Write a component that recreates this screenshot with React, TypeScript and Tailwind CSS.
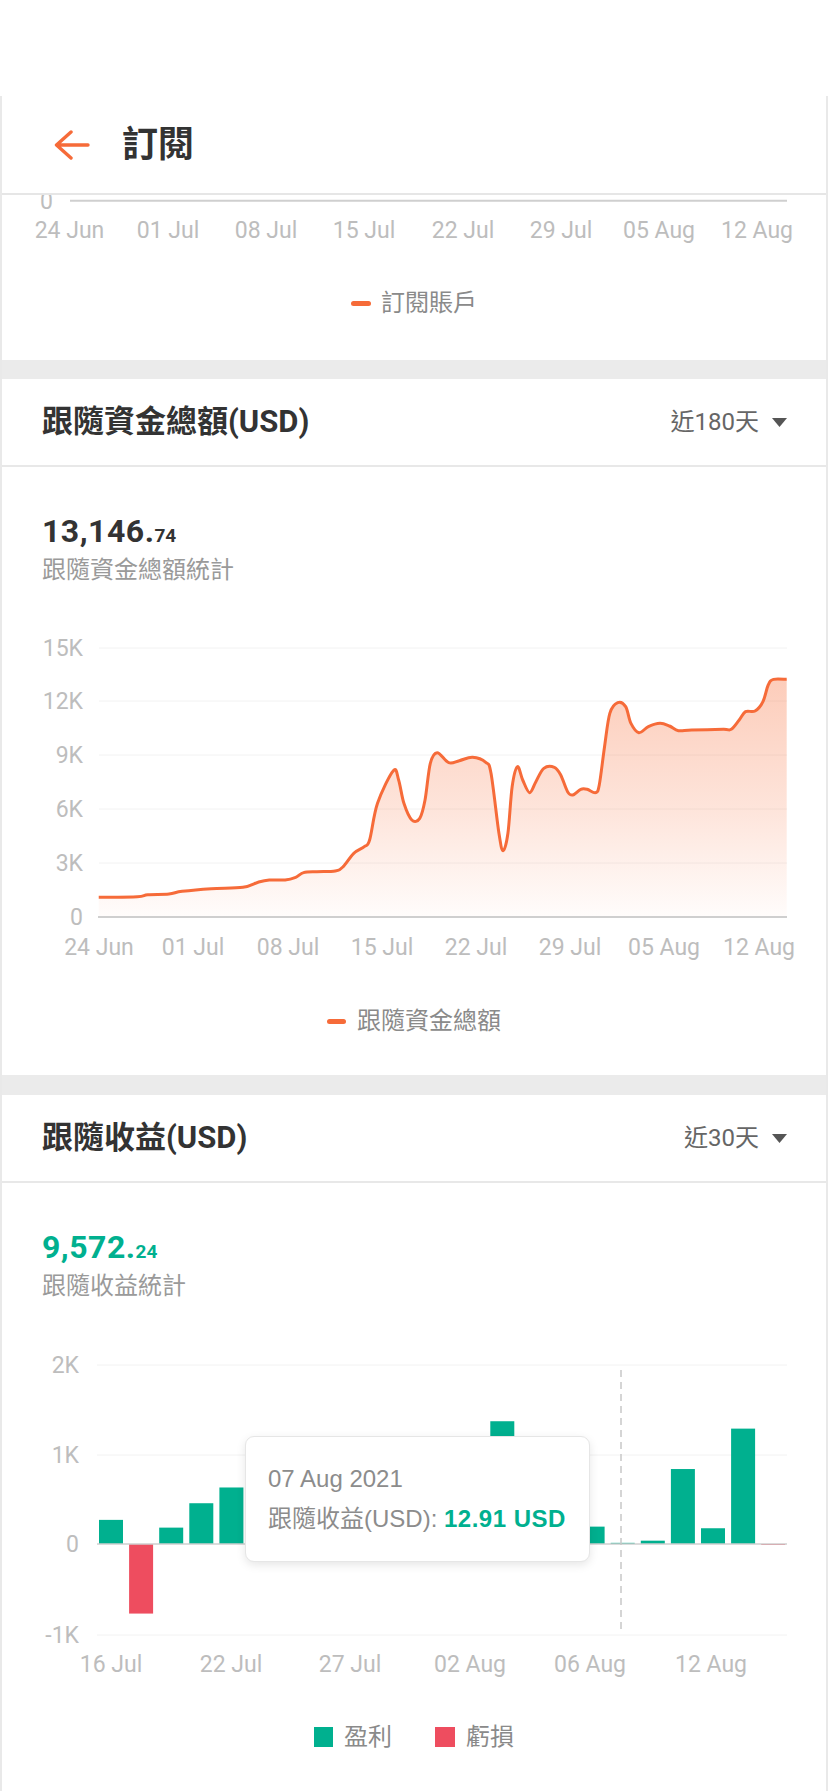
import React from "react";

const ORANGE = "#f66b39";
const GREEN = "#00b08f";
const RED = "#ee4d5f";

type P = [number, number];

function smoothPath(pts: P[]) {
  let d = `M${pts[0][0].toFixed(2)},${pts[0][1].toFixed(2)}`;
  for (let i = 0; i < pts.length - 1; i++) {
    const p0 = pts[i - 1] || pts[i];
    const p1 = pts[i];
    const p2 = pts[i + 1];
    const p3 = pts[i + 2] || p2;
    const c1: P = [p1[0] + (p2[0] - p0[0]) / 6, p1[1] + (p2[1] - p0[1]) / 6];
    const c2: P = [p2[0] - (p3[0] - p1[0]) / 6, p2[1] - (p3[1] - p1[1]) / 6];
    d += ` C${c1[0].toFixed(2)},${c1[1].toFixed(2)} ${c2[0].toFixed(2)},${c2[1].toFixed(2)} ${p2[0].toFixed(2)},${p2[1].toFixed(2)}`;
  }
  return d;
}

// traced points (zoom coordinates) for the fund total line
const RAW: P[] = [
  [187, 892], [260, 890], [280, 884], [320, 882], [345, 874], [400, 866], [460, 862],
  [490, 846], [510, 840], [540, 840], [560, 832], [575, 818], [600, 815], [635, 813],
  [650, 800], [670, 760], [690, 740], [700, 720], [715, 610], [745, 512], [755, 540],
  [765, 610], [780, 660], [795, 655], [805, 600], [815, 490], [828, 458], [850, 488],
  [870, 482], [895, 472], [920, 487], [930, 520], [945, 700], [953, 752], [962, 700],
  [970, 560], [980, 500], [990, 540], [1003, 578], [1015, 545], [1030, 505], [1050, 502],
  [1062, 525], [1075, 575], [1085, 585], [1100, 568], [1112, 568], [1128, 578], [1135, 555],
  [1145, 440], [1155, 340], [1170, 308], [1185, 320], [1195, 370], [1210, 398], [1228, 380],
  [1250, 370], [1268, 378], [1285, 392], [1310, 390], [1370, 388], [1385, 388], [1400, 360],
  [1412, 335], [1430, 333], [1445, 305], [1455, 255], [1465, 238], [1490, 238],
];

// chart 2 svg top at page y=585, left offset 2
const LINE_PTS: P[] = RAW.map(([zx, zy]) => [zx / 1.894 - 2, zy / 3 + 600 - 585]);

const BARS = [
  0.268, -0.773, 0.182, 0.453, 0.628, 0.52, 0.3, 0.15, 0.7, 0.41, 0.88, 0.24, 0.33,
  1.364, 0.64, 0.32, 0.193, 0.0129, 0.037, 0.833, 0.175, 1.282, -0.006,
];

function BackArrow() {
  return (
    <svg width="36" height="30" viewBox="0 0 36 30" fill="none">
      <path
        d="M2.5 15 H34 M17 2 L2.5 15 L17 28"
        stroke={ORANGE}
        strokeWidth="3.4"
        strokeLinecap="round"
        strokeLinejoin="round"
      />
    </svg>
  );
}

function Caret() {
  return (
    <svg width="15" height="9" viewBox="0 0 15 9">
      <path d="M0 0 H15 L7.5 9 Z" fill="#555" />
    </svg>
  );
}

function SectionHeader({ title, range }: { title: string; range: string }) {
  return (
    <div className="flex h-[88px] items-center justify-between border-b-2 border-[#e8e8e8] pl-[40px] pr-[39px]">
      <div className="text-[31px] font-bold leading-[40px] text-[#333]">{title}</div>
      <div className="flex items-center gap-[13px]">
        <span className="text-[24px] leading-[30px] text-[#666]">{range}</span>
        <Caret />
      </div>
    </div>
  );
}

function Chart1Remnant() {
  const labels = ["24 Jun", "01 Jul", "08 Jul", "15 Jul", "22 Jul", "29 Jul", "05 Aug", "12 Aug"];
  const xs = [69.5, 168, 266, 364, 463, 561, 659, 757];
  return (
    <svg width="824" height="60" className="block">
      <line x1={68} x2={785} y1={5.7} y2={5.7} stroke="#cfcfcf" strokeWidth="2" />
      <text x={51} y={6} textAnchor="end" dominantBaseline="central" fontSize="23" fill="#bdbdbd">
        0
      </text>
      {labels.map((l, i) => (
        <text
          key={l}
          x={xs[i] - 2}
          y={35}
          textAnchor="middle"
          dominantBaseline="central"
          fontSize="23"
          fill="#bdbdbd"
        >
          {l}
        </text>
      ))}
    </svg>
  );
}

function Chart2() {
  const grid = [
    { y: 63, l: "15K" },
    { y: 116, l: "12K" },
    { y: 170, l: "9K" },
    { y: 224, l: "6K" },
    { y: 278, l: "3K" },
  ];
  const zero = 332;
  const labels = ["24 Jun", "01 Jul", "08 Jul", "15 Jul", "22 Jul", "29 Jul", "05 Aug", "12 Aug"];
  const xs = [99, 193, 288, 382, 476, 570, 664, 759];
  const line = smoothPath(LINE_PTS);
  const last = LINE_PTS[LINE_PTS.length - 1];
  const first = LINE_PTS[0];
  const area = `${line} L${last[0]},${zero} L${first[0]},${zero} Z`;
  return (
    <svg width="824" height="390" className="block">
      <defs>
        <linearGradient id="fundFill" x1="0" y1="0" x2="0" y2="1">
          <stop offset="0" stopColor="#f87a4a" stopOpacity="0.38" />
          <stop offset="0.55" stopColor="#f87a4a" stopOpacity="0.2" />
          <stop offset="1" stopColor="#f87a4a" stopOpacity="0.02" />
        </linearGradient>
      </defs>
      {grid.map((g) => (
        <g key={g.l}>
          <line x1={97} x2={785} y1={g.y} y2={g.y} stroke="#f2f2f2" strokeWidth="1" />
          <text x={81} y={g.y} textAnchor="end" dominantBaseline="central" fontSize="23" fill="#bdbdbd">
            {g.l}
          </text>
        </g>
      ))}
      <path d={area} fill="url(#fundFill)" />
      <path d={line} fill="none" stroke={ORANGE} strokeWidth="3" strokeLinejoin="round" />
      <line x1={96} x2={785} y1={zero} y2={zero} stroke="#cfcfcf" strokeWidth="2" />
      <text x={81} y={zero} textAnchor="end" dominantBaseline="central" fontSize="23" fill="#bdbdbd">
        0
      </text>
      {labels.map((l, i) => (
        <text
          key={l}
          x={xs[i] - 2}
          y={362}
          textAnchor="middle"
          dominantBaseline="central"
          fontSize="23"
          fill="#bdbdbd"
        >
          {l}
        </text>
      ))}
    </svg>
  );
}

function Chart3() {
  const zero = 240;
  const perK = 90;
  const grid = [
    { y: 61, l: "2K" },
    { y: 151, l: "1K" },
    { y: 331, l: "-1K" },
  ];
  const labels = ["16 Jul", "22 Jul", "27 Jul", "02 Aug", "06 Aug", "12 Aug"];
  const xs = [111, 231, 350, 470, 590, 711];
  return (
    <svg width="824" height="388" className="block">
      {grid.map((g) => (
        <g key={g.l}>
          <line x1={95} x2={785} y1={g.y} y2={g.y} stroke="#f2f2f2" strokeWidth="1" />
          <text x={77} y={g.y} textAnchor="end" dominantBaseline="central" fontSize="23" fill="#bdbdbd">
            {g.l}
          </text>
        </g>
      ))}
      <text x={77} y={zero} textAnchor="end" dominantBaseline="central" fontSize="23" fill="#bdbdbd">
        0
      </text>
      {BARS.map((v, i) => {
        const x = 97 + i * 30.1;
        const h = Math.max(Math.abs(v) * perK, 1);
        const y = v >= 0 ? zero - h : zero;
        return <rect key={i} x={x} y={y} width={24} height={h} fill={v >= 0 ? GREEN : RED} />;
      })}
      <line x1={95} x2={785} y1={zero} y2={zero} stroke="#cfcfcf" strokeWidth="1.5" />
      <line x1={619} x2={619} y1={66} y2={330} stroke="#c8c8c8" strokeWidth="1.5" strokeDasharray="7 5" />
      {labels.map((l, i) => (
        <text
          key={l}
          x={xs[i] - 2}
          y={360}
          textAnchor="middle"
          dominantBaseline="central"
          fontSize="23"
          fill="#bdbdbd"
        >
          {l}
        </text>
      ))}
    </svg>
  );
}

export default function App() {
  return (
    <div className="min-h-screen bg-white font-['Roboto','Noto_Sans_CJK_TC',sans-serif]">
      <div className="h-[96px]" />
      <div className="border-x-2 border-[#e9e9e9]">
        {/* Header */}
        <div className="flex h-[99px] items-center border-b-2 border-[#e6e6e6] pl-[52px]">
          <BackArrow />
          <div className="ml-[32px] text-[36px] font-bold leading-[44px] text-[#333]">訂閱</div>
        </div>

        {/* Section 1 remnant */}
        <div className="flex h-[165px] flex-col overflow-hidden">
          <Chart1Remnant />
          <div className="mt-[33px] flex items-center justify-center gap-[10px]">
            <span className="h-[5px] w-[20px] rounded-full bg-[#f66b39]" />
            <span className="text-[24px] leading-[30px] text-[#8a8a8a]">訂閱賬戶</span>
          </div>
        </div>

        <div className="h-[19px] bg-[#ebebeb]" />

        {/* Section 2 */}
        <SectionHeader title="跟隨資金總額(USD)" range="近180天" />
        <div className="flex h-[608px] flex-col pt-[47px]">
          <div className="flex items-baseline pl-[40px] font-bold text-[#333]">
            <span className="text-[32px] leading-[34px] tracking-[0.5px]">13,146.</span>
            <span className="text-[19px] leading-[34px]">74</span>
          </div>
          <div className="mt-[2px] pl-[40px] text-[24px] leading-[30px] text-[#9a9a9a]">跟隨資金總額統計</div>
          <Chart2 />
          <div className="mt-[31px] flex items-center justify-center gap-[11px]">
            <span className="h-[5px] w-[19px] rounded-full bg-[#f66b39]" />
            <span className="text-[24px] leading-[30px] text-[#8a8a8a]">跟隨資金總額</span>
          </div>
        </div>

        <div className="h-[20px] bg-[#ebebeb]" />

        {/* Section 3 */}
        <SectionHeader title="跟隨收益(USD)" range="近30天" />
        <div className="relative flex h-[608px] flex-col pt-[47px]">
          <div className="flex items-baseline pl-[40px] font-bold text-[#00b08f]">
            <span className="text-[32px] leading-[34px] tracking-[0.5px]">9,572.</span>
            <span className="text-[19px] leading-[34px]">24</span>
          </div>
          <div className="mt-[2px] pl-[40px] text-[24px] leading-[30px] text-[#9a9a9a]">跟隨收益統計</div>
          <div className="mt-[3px]">
            <Chart3 />
          </div>
          <div className="mt-[30px] flex items-center justify-center">
            <span className="h-[20px] w-[19px] bg-[#00b08f]" />
            <span className="ml-[11px] text-[24px] leading-[30px] text-[#8a8a8a]">盈利</span>
            <span className="ml-[43px] h-[20px] w-[20px] bg-[#ee4d5f]" />
            <span className="ml-[11px] text-[24px] leading-[30px] text-[#8a8a8a]">虧損</span>
          </div>

          {/* Tooltip */}
          <div className="absolute left-[243px] top-[253px] flex h-[126px] w-[345px] flex-col justify-center gap-[10px] rounded-[9px] border border-[#e6e6e6] bg-white pl-[22px] font-['Liberation_Sans','Noto_Sans_CJK_TC',sans-serif] shadow-[0_3px_10px_rgba(0,0,0,0.10)]">
            <div className="text-[24px] leading-[30px] text-[#8c8c8c]">07 Aug 2021</div>
            <div className="whitespace-nowrap text-[24px] leading-[30px] text-[#8c8c8c]">
              跟隨收益(USD):{" "}
              <span className="font-bold tracking-[0.5px] text-[#00b08f]">12.91 USD</span>
            </div>
          </div>
        </div>
      </div>
    </div>
  );
}
